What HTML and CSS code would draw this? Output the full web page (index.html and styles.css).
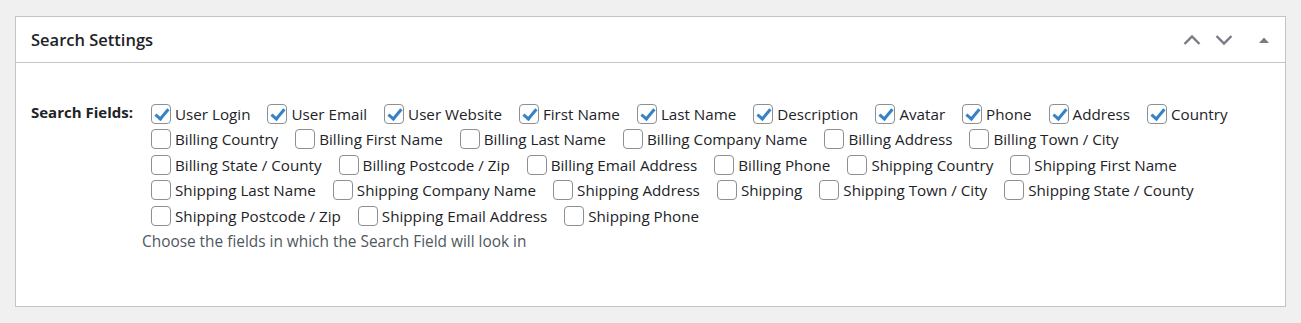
FILE: index.html
```html
<!DOCTYPE html>
<html lang="en">
<head>
    <meta charset="UTF-8">
    <title>Search Settings</title>
    <link rel="stylesheet" href="styles.css">
</head>
<body>
  <div class="postbox">
    <div class="postbox-header">
      <h2>Search Settings</h2>
      <div class="handle-actions">
        <button class="handle" type="button">
          <svg width="18" height="18" viewBox="0 0 18 18"><path d="M1.5 13 9 5.5 16.5 13" fill="none" stroke="#787c82" stroke-width="2.4"/></svg>
        </button>
        <button class="handle" type="button">
          <svg width="18" height="18" viewBox="0 0 18 18"><path d="M1.5 5 9 12.5 16.5 5" fill="none" stroke="#787c82" stroke-width="2.4"/></svg>
        </button>
        <button class="handle toggle" type="button">
          <svg width="12" height="12" viewBox="0 0 12 12"><path d="M1 9 6 3.5 11 9Z" fill="#787c82"/></svg>
        </button>
      </div>
    </div>

    <div class="inside">
      <div class="form-row">
        <div class="row-label">Search Fields:</div>
        <div class="row-field">
          <div class="checks">
            <label><input type="checkbox" checked>User Login</label>
            <label><input type="checkbox" checked>User Email</label>
            <label><input type="checkbox" checked>User Website</label>
            <label><input type="checkbox" checked>First Name</label>
            <label><input type="checkbox" checked>Last Name</label>
            <label><input type="checkbox" checked>Description</label>
            <label><input type="checkbox" checked>Avatar</label>
            <label><input type="checkbox" checked>Phone</label>
            <label><input type="checkbox" checked>Address</label>
            <label><input type="checkbox" checked>Country</label>
            <label><input type="checkbox">Billing Country</label>
            <label><input type="checkbox">Billing First Name</label>
            <label><input type="checkbox">Billing Last Name</label>
            <label><input type="checkbox">Billing Company Name</label>
            <label><input type="checkbox">Billing Address</label>
            <label><input type="checkbox">Billing Town / City</label>
            <label><input type="checkbox">Billing State / County</label>
            <label><input type="checkbox">Billing Postcode / Zip</label>
            <label><input type="checkbox">Billing Email Address</label>
            <label><input type="checkbox">Billing Phone</label>
            <label><input type="checkbox">Shipping Country</label>
            <label><input type="checkbox">Shipping First Name</label>
            <label><input type="checkbox">Shipping Last Name</label>
            <label><input type="checkbox">Shipping Company Name</label>
            <label><input type="checkbox">Shipping Address</label>
            <label><input type="checkbox">Shipping</label>
            <label><input type="checkbox">Shipping Town / City</label>
            <label><input type="checkbox">Shipping State / County</label>
            <label><input type="checkbox">Shipping Postcode / Zip</label>
            <label><input type="checkbox">Shipping Email Address</label>
            <label><input type="checkbox">Shipping Phone</label>
          </div>
          <p class="description">Choose the fields in which the Search Field will look in</p>
        </div>
      </div>
    </div>
  </div>
</body>
</html>
```

FILE: styles.css
```css
*{
   box-sizing: border-box;
}

body{
   margin: 0;
   padding: 16px 15px;
   background: #f0f0f1;
   font-family: 'Open Sans', sans-serif;
   color: #1d2327;
}

.postbox{
   background: #fff;
   border: 1px solid #c3c4c7;
   height: 291px;
}

.postbox-header{
   display: flex;
   align-items: center;
   justify-content: space-between;
   height: 46px;
   border-bottom: 1px solid #c3c4c7;
   padding: 0 5px 0 15px;
}

.postbox-header h2{
   margin: 0;
   font-size: 16.5px;
   font-weight: 600;
}

.handle-actions{
   display: flex;
   align-items: center;
}

.handle{
   border: 0;
   background: none;
   padding: 0;
   width: 32px;
   height: 32px;
   display: flex;
   align-items: center;
   justify-content: center;
   cursor: pointer;
}

.handle.toggle{
   margin-left: 8px;
}

.inside{
   padding: 38px 14px 0 15px;
}

.form-row{
   display: flex;
}

.row-label{
   width: 111px;
   flex: none;
   font-weight: 700;
   font-size: 15px;
   line-height: 22px;
}

.row-field{
   flex: 1;
}

.checks{
   display: flex;
   flex-wrap: wrap;
   padding-left: 9px;
}

.checks label{
   display: inline-flex;
   align-items: center;
   height: 25.5px;
   margin-right: 17px;
   font-size: 15.2px;
   white-space: nowrap;
}

.checks input{
   appearance: none;
   width: 20px;
   height: 20px;
   margin: 0 4px 0 0;
   border: 1px solid #8c8f94;
   border-radius: 4px;
   background: #fff;
   position: relative;
}

.checks input:checked::before{
   content: "";
   position: absolute;
   left: 6px;
   top: 1.5px;
   width: 5px;
   height: 11px;
   border: solid #3582c4;
   border-width: 0 3.5px 3.5px 0;
   transform: rotate(40deg);
}

.description{
   margin: 1px 0 0;
   font-size: 15.4px;
   color: #50575e;
   line-height: 24px;
}
```
